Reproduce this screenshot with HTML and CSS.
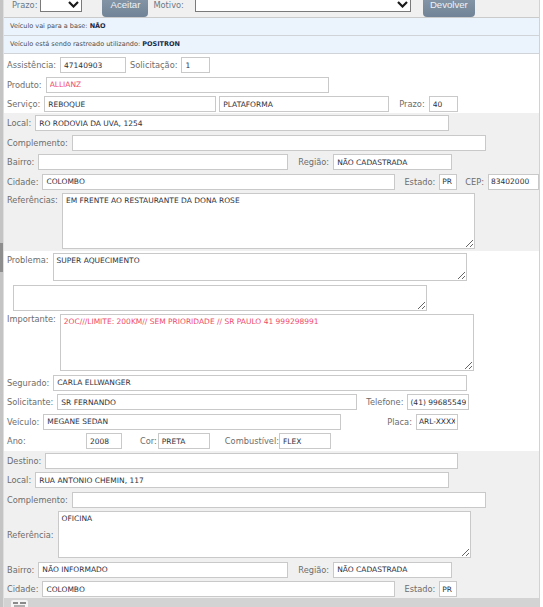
FILE: index.html
```html
<!DOCTYPE html>
<html>
<head>
    <meta http-equiv="Content-Type" content="text/html; charset=UTF-8">
    <title>Atendimento</title>
    <link rel="stylesheet" href="styles.css">
</head>
<body>
<div class="frame">
    <div class="scroll"><div class="thumb"></div></div>
    <div class="panel">
        <div class="toolbar">
            <span class="tb-label">Prazo:</span>
            <div class="select sel-prazo">
                <svg width="11" height="7" viewBox="0 0 11 7"><polyline points="1,1 5.5,5.5 10,1" fill="none" stroke="#1a1a1a" stroke-width="2.2"/></svg>
            </div>
            <button class="btn btn-aceitar">Aceitar</button>
            <span class="tb-label tb-motivo">Motivo:</span>
            <div class="select sel-motivo">
                <svg width="11" height="7" viewBox="0 0 11 7"><polyline points="1,1 5.5,5.5 10,1" fill="none" stroke="#1a1a1a" stroke-width="2.2"/></svg>
            </div>
            <button class="btn btn-devolver">Devolver</button>
        </div>
        <div class="info">Veículo vai para a base: <b>NÃO</b></div>
        <div class="info">Veículo está sendo rastreado utilizando: <b>POSITRON</b></div>

        <!-- atendimento -->
        <div class="section s1">
            <div class="row">
                <label>Assistência:</label><input class="w66" value="47140903" readonly>
                <label>Solicitação:</label><input class="w29" value="1" readonly>
            </div>
            <div class="row">
                <label>Produto:</label><input class="w283 red" value="ALLIANZ" readonly>
            </div>
            <div class="row">
                <label>Serviço:</label><input class="w172" value="REBOQUE" readonly>
                <input class="w170 tight" value="PLATAFORMA" readonly>
                <label class="ml6">Prazo:</label><input class="w29" value="40" readonly>
            </div>
        </div>

        <!-- origem -->
        <div class="section gray s2">
            <div class="row">
                <label>Local:</label><input class="w414" value="RO RODOVIA DA UVA, 1254" readonly>
            </div>
            <div class="row">
                <label>Complemento:</label><input class="w414" value="" readonly>
            </div>
            <div class="row">
                <label>Bairro:</label><input class="w250" value="" readonly>
                <label class="ml6">Região:</label><input class="w119" value="NÃO CADASTRADA" readonly>
            </div>
            <div class="row">
                <label>Cidade:</label><input class="w353" value="COLOMBO" readonly>
                <label class="ml5">Estado:</label><input class="w18 uf" value="PR" readonly>
                <label class="ml4">CEP:</label><input class="w51 uf" value="83402000" readonly>
            </div>
            <div class="row top">
                <label>Referências:</label><textarea class="w413 h56" readonly>EM FRENTE AO RESTAURANTE DA DONA ROSE</textarea>
            </div>
        </div>

        <!-- problema / segurado -->
        <div class="section s3">
            <div class="row top">
                <label>Problema:</label><textarea class="w414 h28" readonly>SUPER AQUECIMENTO</textarea>
            </div>
            <div class="row">
                <textarea class="w414 h26 ml6" readonly></textarea>
            </div>
            <div class="row top">
                <label class="lbl-imp">Importante:</label><textarea class="w414 h57 red" readonly>2OC///LIMITE: 200KM// SEM PRIORIDADE // SR PAULO 41 999298991</textarea>
            </div>
            <div class="row">
                <label>Segurado:</label><input class="w414" value="CARLA ELLWANGER" readonly>
            </div>
            <div class="row">
                <label>Solicitante:</label><input class="w300" value="SR FERNANDO" readonly>
                <label class="ml5">Telefone:</label><input class="w62 uf" value="(41) 996855493" readonly>
            </div>
            <div class="row">
                <label>Veículo:</label><input class="w298" value="MEGANE SEDAN" readonly>
                <label class="ml42">Placa:</label><input class="w42 uf" value="ARL-XXXX" readonly>
            </div>
            <div class="row">
                <label class="lbl-ano">Ano:</label><input class="w36" value="2008" readonly>
                <label class="lbl-cor">Cor:</label><input class="w52" value="PRETA" readonly>
                <label class="lbl-comb">Combustível:</label><input class="w52" value="FLEX" readonly>
            </div>
        </div>

        <!-- destino -->
        <div class="section gray s4">
            <div class="row">
                <label>Destino:</label><input class="w413" value="" readonly>
            </div>
            <div class="row">
                <label>Local:</label><input class="w414" value="RUA ANTONIO CHEMIN, 117" readonly>
            </div>
            <div class="row">
                <label>Complemento:</label><input class="w414" value="" readonly>
            </div>
            <div class="row">
                <label>Referência:</label><textarea class="w413 h47" readonly>OFICINA</textarea>
            </div>
            <div class="row">
                <label>Bairro:</label><input class="w250" value="NÃO INFORMADO" readonly>
                <label class="ml6">Região:</label><input class="w119" value="NÃO CADASTRADA" readonly>
            </div>
            <div class="row">
                <label>Cidade:</label><input class="w353" value="COLOMBO" readonly>
                <label class="ml5">Estado:</label><input class="w18 uf" value="PR" readonly>
            </div>
        </div>

        <div class="footer">
            <svg width="20" height="12" viewBox="0 0 20 12">
                <rect x="1" y="2" width="17" height="10" rx="2" fill="#f4f4f4"/>
                <rect x="3" y="4" width="5" height="2" fill="#8a8a8a"/>
                <rect x="10" y="4" width="6" height="2" fill="#8a8a8a"/>
                <rect x="4" y="7" width="11" height="2" fill="#b0b0b0"/>
            </svg>
        </div>
    </div>
</div>
</body>
</html>
```

FILE: styles.css
```css
body {
    margin: 0;
    font-family: "DejaVu Sans", Verdana, sans-serif;
    background: #fff;
    overflow: hidden;
}

.frame {
    display: flex;
    height: 607px;
}

.scroll {
    width: 3px;
    flex-shrink: 0;
    background: #c4c4c4;
    padding-top: 243px;
    box-sizing: border-box;
}
.thumb {
    height: 29px;
    background: #8e8e8e;
}

.panel {
    width: 535px;
    flex-shrink: 0;
    border-left: 1px solid #dedede;
    border-right: 1px solid #d2d2d2;
}

/* barra de acoes (cortada no topo) */
.toolbar {
    display: flex;
    margin-top: -12px;
    height: 29px;
    padding-left: 8px;
    background: #f0f0f0;
    border-bottom: 1px solid #cacaca;
}
.tb-label {
    margin-top: 11px;
    line-height: 12px;
    font-size: 8.25px;
    color: #6b7886;
}
.tb-motivo {
    margin-left: 5px;
}
.select {
    margin-top: 8px;
    height: 16px;
    box-sizing: border-box;
    border: 1px solid #7a7a7a;
    background: #fff;
    display: flex;
    align-items: center;
    justify-content: flex-end;
    padding-right: 2px;
}
.sel-prazo {
    width: 42px;
    margin-left: 3px;
}
.sel-motivo {
    width: 216px;
    margin-left: 11px;
}
.btn {
    align-self: flex-end;
    height: 26px;
    padding: 0;
    border: 0;
    border-radius: 4px;
    background: linear-gradient(#8b9cac, #718497);
    color: #eef2f6;
    font-family: "Liberation Sans", Arial, sans-serif;
    font-size: 9.6px;
}
.btn-aceitar {
    width: 46px;
    margin-left: 20px;
}
.btn-devolver {
    width: 52px;
    margin-left: 12px;
}

.info {
    height: 17px;
    line-height: 17px;
    padding-left: 6px;
    background: #ebf4fd;
    border-bottom: 1px solid #d0d4d8;
    font-size: 6.5px;
    color: #4c4c4c;
}
.info b {
    color: #1c2a44;
}

/* blocos do formulario */
.section {
    display: flex;
    flex-direction: column;
    gap: 3.5px;
    padding: 2px 0 2px 3px;
}
.section.gray {
    background: #f0f0f0;
}
.s1 {
    padding-top: 3px;
    padding-bottom: 1px;
}
.s3 {
    padding-bottom: 1.5px;
}
.s4 {
    padding-bottom: 1px;
}

.row {
    display: flex;
    align-items: center;
    gap: 4px;
}
.row label {
    font-size: 8.25px;
    color: #6d6d6d;
    white-space: nowrap;
}
.row.top {
    align-items: flex-start;
}
.row.top label {
    margin-top: 1.5px;
}
.row.top .lbl-imp {
    margin-top: 0;
}

input, textarea {
    box-sizing: border-box;
    border: 1px solid #c9c9c9;
    background: #fff;
    font-family: "DejaVu Sans", Verdana, sans-serif;
    font-size: 7.5px;
    color: #2e3140;
    outline: none;
    margin: 0;
}
input {
    height: 16px;
    padding: 0 3px;
}
input.uf {
    padding: 0 2px;
}
textarea {
    padding: 2px 3px;
    line-height: 10px;
}
.red {
    color: #ee4a6a;
}

.w18 { width: 18px; }
.w29 { width: 29px; }
.w36 { width: 36px; }
.w42 { width: 42px; }
.w51 { width: 51px; }
.w52 { width: 52px; }
.w62 { width: 62px; }
.w66 { width: 66px; }
.w119 { width: 119px; }
.w170 { width: 170px; }
.w172 { width: 172px; }
.w250 { width: 250px; }
.w283 { width: 283px; }
.w298 { width: 298px; }
.w300 { width: 300px; }
.w353 { width: 353px; }
.w413 { width: 413px; }
.w414 { width: 414px; }

.h26 { height: 26px; }
.h28 { height: 28px; }
.h47 { height: 47px; }
.h56 { height: 56px; }
.h57 { height: 57px; }

.tight { margin-left: -1px; }
.ml4 { margin-left: 4px; }
.ml5 { margin-left: 5px; }
.ml6 { margin-left: 6px; }
.ml42 { margin-left: 42px; }

.row .lbl-ano {
    width: 75px;
}
.row .lbl-cor {
    margin-left: 14px;
    margin-right: -3px;
}
.row .lbl-comb {
    margin-left: 11px;
    margin-right: -4px;
}

.footer {
    height: 12px;
    padding-left: 6px;
    background: #d3d3d3;
}
.footer svg {
    display: block;
}
```
